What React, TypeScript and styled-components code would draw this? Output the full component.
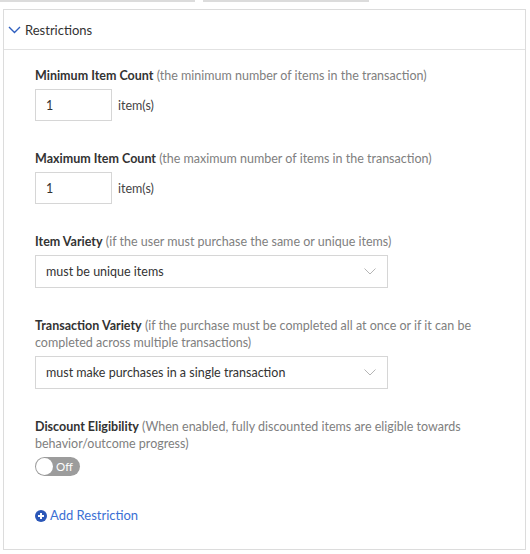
import * as React from 'react'
import styled, { createGlobalStyle } from 'styled-components'
import { useState } from 'react'

const GlobalStyle = createGlobalStyle`
    body {
        margin: 0;
        background: #ffffff;
        font-family: Lato, "Noto Sans", sans-serif;
        color: #333333;
    }
`

const Page = styled.div`
    width: 530px;
    height: 554px;
    overflow: hidden;
`

const TabLines = styled.div`
    display: flex;
    gap: 8px;
    height: 2px;
`

const TabLine = styled.div<{ $w: number }>`
    width: ${p => p.$w}px;
    height: 2px;
    background: #dcdcdc;
`

const Panel = styled.div`
    margin: 7px 0 0 3px;
    width: 521px;
    border: 1px solid #dcdcdc;
`

const Header = styled.div`
    display: flex;
    align-items: center;
    gap: 4px;
    height: 39px;
    padding-left: 4px;
    border-bottom: 1px solid #e2e2e2;
    font-size: 13px;
    color: #333333;
    cursor: pointer;
`

const Body = styled.div`
    padding: 17px 20px 24px 31px;
`

const Field = styled.div`
    margin-bottom: 29px;
`

const Label = styled.div`
    font-size: 12.5px;
    line-height: 17px;
    max-width: 470px;
    margin-bottom: 5px;
    color: #808080;

    b {
        font-weight: 700;
        color: #333333;
    }
`

const Row = styled.div`
    display: flex;
    align-items: center;
    gap: 6px;
`

const NumberInput = styled.input`
    box-sizing: border-box;
    width: 77px;
    height: 32px;
    border: 1px solid #d6d6d6;
    padding: 0 10px;
    font-family: inherit;
    font-size: 12.5px;
    color: #333333;
    outline: none;
`

const Unit = styled.span`
    font-size: 12.5px;
    color: #444444;
`

const Select = styled.div`
    box-sizing: border-box;
    display: flex;
    align-items: center;
    justify-content: space-between;
    width: 353px;
    height: 33px;
    border: 1px solid #d6d6d6;
    padding: 0 11px 0 10px;
    font-size: 12.5px;
    color: #333333;
`

const Toggle = styled.button<{ $on: boolean }>`
    position: relative;
    display: flex;
    align-items: center;
    width: 45px;
    height: 19px;
    border: none;
    border-radius: 10px;
    padding: 0 0 0 21px;
    background: ${p => (p.$on ? '#2f62c4' : '#9c9c9c')};
    color: #ffffff;
    font-family: inherit;
    font-size: 11.5px;
    cursor: pointer;

    &::before {
        content: '';
        position: absolute;
        top: 1px;
        left: ${p => (p.$on ? '27px' : '1px')};
        width: 17px;
        height: 17px;
        border-radius: 50%;
        background: #ffffff;
    }
`

const AddLink = styled.a`
    display: inline-flex;
    align-items: center;
    gap: 3px;
    margin-top: 2px;
    font-size: 13px;
    line-height: 17px;
    color: #3b6fd4;
    text-decoration: none;
    cursor: pointer;
`

const Chevron = () => (
    <svg width="13" height="8" viewBox="0 0 13 8">
        <path d="M1 1 L6.5 6.5 L12 1" fill="none" stroke="#2f5fbf" strokeWidth="1.4" />
    </svg>
)

const SelectChevron = () => (
    <svg width="12" height="7" viewBox="0 0 12 7">
        <path d="M0.5 0.5 L6 6 L11.5 0.5" fill="none" stroke="#b5b5b5" strokeWidth="1" />
    </svg>
)

const PlusCircle = () => (
    <svg width="12" height="12" viewBox="0 0 12 12">
        <circle cx="6" cy="6" r="6" fill="#2b57b8" />
        <path d="M6 3 V9 M3 6 H9" stroke="#ffffff" strokeWidth="2" />
    </svg>
)

export default function App() {
    const [discount, setDiscount] = useState(false)

    return (
        <Page>
            <GlobalStyle />
            <TabLines>
                <TabLine $w={195} />
                <TabLine $w={166} />
            </TabLines>
            <Panel>
                <Header>
                    <Chevron />
                    Restrictions
                </Header>
                <Body>
                    <Field>
                        <Label><b>Minimum Item Count</b> (the minimum number of items in the transaction)</Label>
                        <Row>
                            <NumberInput defaultValue="1" />
                            <Unit>item(s)</Unit>
                        </Row>
                    </Field>
                    <Field>
                        <Label><b>Maximum Item Count</b> (the maximum number of items in the transaction)</Label>
                        <Row>
                            <NumberInput defaultValue="1" />
                            <Unit>item(s)</Unit>
                        </Row>
                    </Field>
                    <Field>
                        <Label><b>Item Variety</b> (if the user must purchase the same or unique items)</Label>
                        <Select>
                            must be unique items
                            <SelectChevron />
                        </Select>
                    </Field>
                    <Field>
                        <Label><b>Transaction Variety</b> (if the purchase must be completed all at once or if it can be completed across multiple transactions)</Label>
                        <Select>
                            must make purchases in a single transaction
                            <SelectChevron />
                        </Select>
                    </Field>
                    <Field>
                        <Label><b>Discount Eligibility</b> (When enabled, fully discounted items are eligible towards behavior/outcome progress)</Label>
                        <Toggle $on={discount} onClick={() => setDiscount(!discount)}>
                            {discount ? 'On' : 'Off'}
                        </Toggle>
                    </Field>
                    <AddLink>
                        <PlusCircle />
                        Add Restriction
                    </AddLink>
                </Body>
            </Panel>
        </Page>
    )
}
